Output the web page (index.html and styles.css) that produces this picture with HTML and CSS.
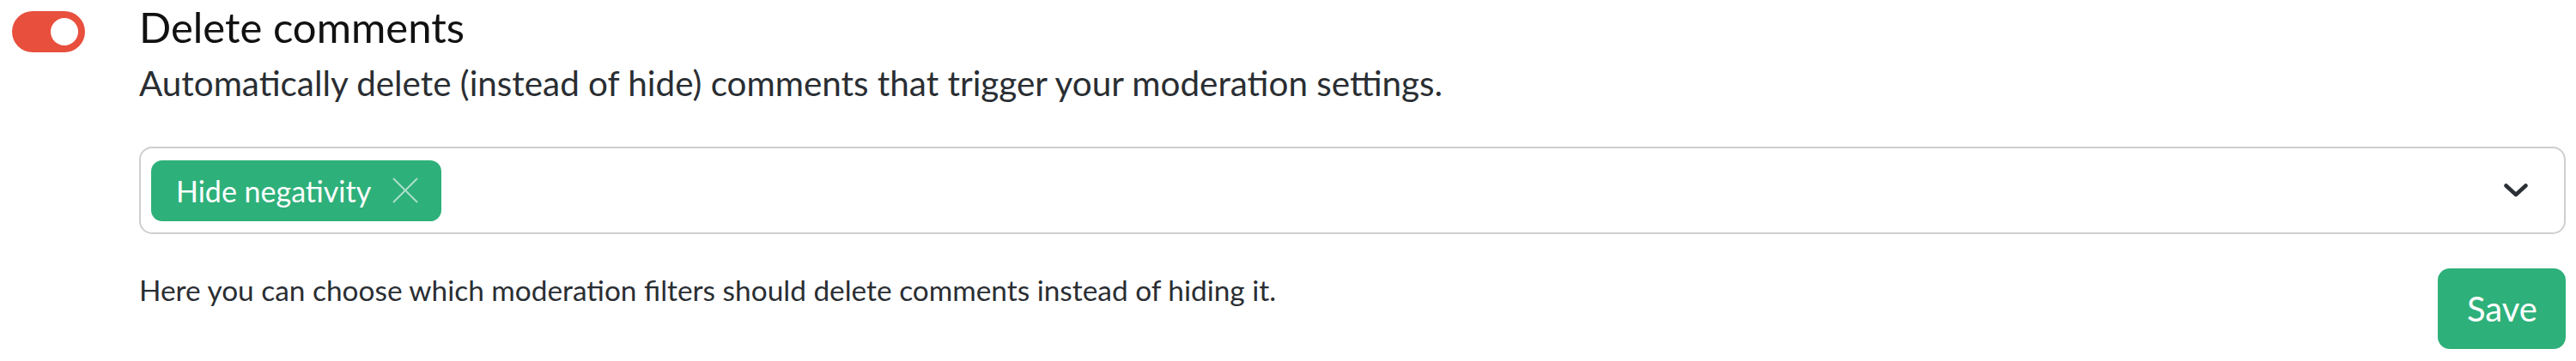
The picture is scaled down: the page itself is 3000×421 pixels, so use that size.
FILE: index.html
```
<!DOCTYPE html>
<html>
<head>
<meta charset="utf-8">
<link rel="stylesheet" href="styles.css">
</head>
<body>
<div class="setting">
  <div class="toggle-col">
    <div class="toggle"><span class="knob"></span></div>
  </div>
  <div class="content">
    <div class="title">Delete comments</div>
    <div class="desc">Automatically delete (instead of hide) comments that trigger your moderation settings.</div>
    <div class="select">
      <div class="tags">
        <span class="tag">Hide negativity
          <svg class="tag-x" width="30" height="30" viewBox="0 0 30 30"><path d="M1 1 L29 29 M29 1 L1 29" stroke="currentColor" stroke-width="2" fill="none"/></svg>
        </span>
      </div>
      <svg class="chevron" width="28" height="16" viewBox="0 0 28 16"><path d="M2.5 2.5 L14 13 L25.5 2.5" stroke="#2b3036" stroke-width="4.5" fill="none" stroke-linecap="round" stroke-linejoin="round"/></svg>
    </div>
    <div class="footer">
      <div class="hint">Here you can choose which moderation filters should delete comments instead of hiding it.</div>
      <button class="save">Save</button>
    </div>
  </div>
</div>
</body>
</html>
```

FILE: styles.css
```
html, body {
  margin: 0;
  padding: 0;
  background: #ffffff;
}
body {
  font-family: Lato, "Open Sans", sans-serif;
  color: #2a2e33;
}
.setting {
  display: flex;
  padding: 13px 12px 0 14px;
}
.toggle-col {
  width: 148px;
  flex: none;
}
.toggle {
  width: 85px;
  height: 48px;
  border-radius: 24px;
  background: #e84f3d;
  display: flex;
  align-items: center;
  justify-content: flex-end;
  padding: 0 8px;
  box-sizing: border-box;
}
.knob {
  width: 32px;
  height: 32px;
  border-radius: 50%;
  background: #ffffff;
}
.content {
  flex: 1;
  min-width: 0;
}
.title {
  font-size: 49px;
  line-height: 59px;
  color: #111111;
  margin-top: -11px;
}
.desc {
  font-size: 40.4px;
  line-height: 48px;
  margin-top: 12px;
  color: #2a2e33;
}
.select {
  margin-top: 50px;
  border: 2px solid #cfcfcf;
  border-radius: 15px;
  height: 102px;
  box-sizing: border-box;
  display: flex;
  align-items: center;
  padding: 0 42px 0 12px;
}
.tags {
  flex: 1;
  display: flex;
}
.tag {
  display: inline-flex;
  align-items: center;
  height: 71px;
  box-sizing: border-box;
  padding: 0 27px 0 29px;
  border-radius: 13px;
  background: #2eb07a;
  color: #ffffff;
  font-size: 34px;
  gap: 25px;
}
.tag-x {
  color: rgba(255, 255, 255, 0.6);
}
.footer {
  display: flex;
  justify-content: space-between;
  align-items: flex-start;
  margin-top: 40px;
}
.hint {
  font-size: 33.4px;
  line-height: 42px;
  margin-top: 4px;
  color: #2a2e33;
}
.save {
  font-family: Lato, "Open Sans", sans-serif;
  font-size: 40px;
  line-height: 48px;
  color: #ffffff;
  background: #2eb07a;
  border: none;
  border-radius: 14px;
  padding: 23px 33px 23px 34px;
  margin: 0;
}
```
